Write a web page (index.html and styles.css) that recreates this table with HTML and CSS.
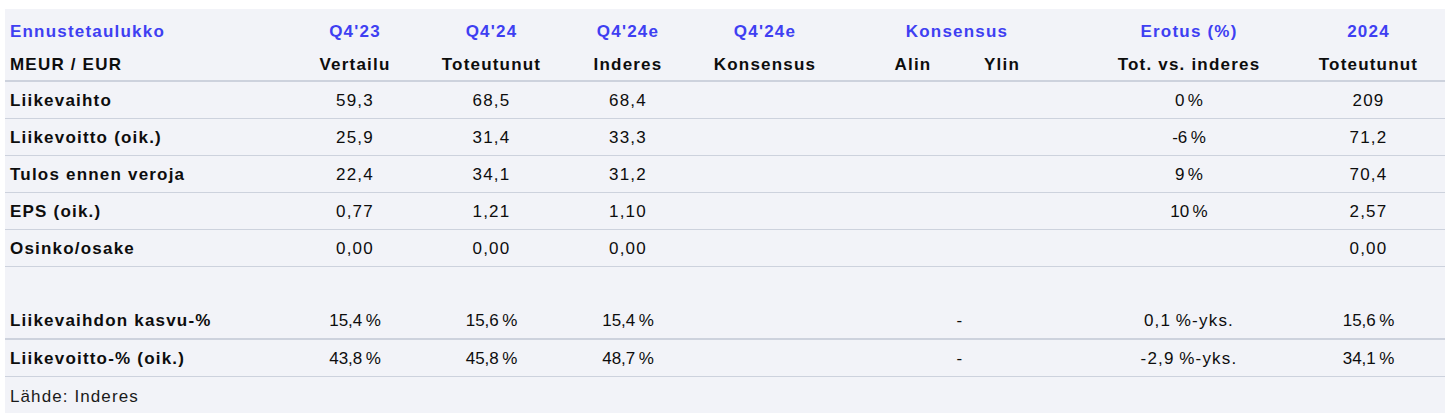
FILE: index.html
```html
<!DOCTYPE html>
<html lang="fi">
<head>
<meta charset="utf-8">
<title>Ennustetaulukko</title>
<link rel="stylesheet" href="styles.css">
</head>
<body>
<div class="panel">
  <div class="row head-top">
    <div class="cell label">Ennustetaulukko</div>
    <div class="cell">Q4'23</div>
    <div class="cell">Q4'24</div>
    <div class="cell">Q4'24e</div>
    <div class="cell">Q4'24e</div>
    <div class="cell span2 kons">Konsensus</div>
    <div class="cell erotus">Erotus (%)</div>
    <div class="cell">2024</div>
  </div>
  <div class="row head-sub">
    <div class="cell label">MEUR / EUR</div>
    <div class="cell">Vertailu</div>
    <div class="cell">Toteutunut</div>
    <div class="cell">Inderes</div>
    <div class="cell">Konsensus</div>
    <div class="cell alin">Alin</div>
    <div class="cell">Ylin</div>
    <div class="cell erotus">Tot. vs. inderes</div>
    <div class="cell">Toteutunut</div>
  </div>
  <div class="row data">
    <div class="cell label">Liikevaihto</div>
    <div class="cell">59,3</div><div class="cell">68,5</div><div class="cell">68,4</div>
    <div class="cell"></div><div class="cell span2 dash"></div>
    <div class="cell erotus">0&#8239;%</div><div class="cell">209</div>
  </div>
  <div class="row data">
    <div class="cell label">Liikevoitto (oik.)</div>
    <div class="cell">25,9</div><div class="cell">31,4</div><div class="cell">33,3</div>
    <div class="cell"></div><div class="cell span2 dash"></div>
    <div class="cell erotus">-6&#8239;%</div><div class="cell">71,2</div>
  </div>
  <div class="row data">
    <div class="cell label">Tulos ennen veroja</div>
    <div class="cell">22,4</div><div class="cell">34,1</div><div class="cell">31,2</div>
    <div class="cell"></div><div class="cell span2 dash"></div>
    <div class="cell erotus">9&#8239;%</div><div class="cell">70,4</div>
  </div>
  <div class="row data">
    <div class="cell label">EPS (oik.)</div>
    <div class="cell">0,77</div><div class="cell">1,21</div><div class="cell">1,10</div>
    <div class="cell"></div><div class="cell span2 dash"></div>
    <div class="cell erotus">10&#8239;%</div><div class="cell">2,57</div>
  </div>
  <div class="row data">
    <div class="cell label">Osinko/osake</div>
    <div class="cell">0,00</div><div class="cell">0,00</div><div class="cell">0,00</div>
    <div class="cell"></div><div class="cell span2 dash"></div>
    <div class="cell erotus"></div><div class="cell">0,00</div>
  </div>
  <div class="row blank"></div>
  <div class="row data thick">
    <div class="cell label">Liikevaihdon kasvu-%</div>
    <div class="cell">15,4&#8239;%</div><div class="cell">15,6&#8239;%</div><div class="cell">15,4&#8239;%</div>
    <div class="cell"></div><div class="cell span2 dash">-</div>
    <div class="cell erotus">0,1&#8239;%-yks.</div><div class="cell">15,6&#8239;%</div>
  </div>
  <div class="row data">
    <div class="cell label">Liikevoitto-% (oik.)</div>
    <div class="cell">43,8&#8239;%</div><div class="cell">45,8&#8239;%</div><div class="cell">48,7&#8239;%</div>
    <div class="cell"></div><div class="cell span2 dash">-</div>
    <div class="cell erotus">-2,9&#8239;%-yks.</div><div class="cell">34,1&#8239;%</div>
  </div>
  <div class="source">Lähde: Inderes</div>
</div>
</body>
</html>
```

FILE: styles.css
```css
html, body {
  margin: 0;
  padding: 0;
  background: #ffffff;
}

body {
  font-family: "Liberation Sans", Arial, sans-serif;
  font-size: 17px;
  color: #0d0d0d;
}

.panel {
  width: 1440px;
  height: 404px;
  margin: 9px 0 0 5px;
  background: #f2f3f8;
  display: flex;
  flex-direction: column;
}

.row {
  box-sizing: border-box;
  display: grid;
  grid-template-columns: 282px 136px 137px 136px 138px 124px 88px 246px 153px;
  align-items: center;
  letter-spacing: 1.2px;
}

.cell {
  text-align: center;
  white-space: nowrap;
}

.cell.label {
  text-align: left;
  padding-left: 5px;
  font-weight: 700;
}

.span2 {
  grid-column: span 2;
}

.kons {
  padding-left: 34px;
}

.alin {
  padding-left: 34px;
}

.dash {
  padding-left: 40px;
}

.erotus {
  padding-left: 40px;
}

.head-top {
  height: 40px;
  padding-top: 5px;
  color: #3f3ff2;
  font-weight: 700;
}

.head-sub {
  height: 33px;
  font-weight: 700;
  border-bottom: 2px solid #cdd2dd;
}

.data {
  height: 37px;
  padding-top: 2px;
  border-bottom: 1px solid #cdd2dd;
}

.data.thick {
  height: 38px;
  border-bottom: 2px solid #cdd2dd;
}

.blank {
  height: 35px;
}

.source {
  flex: 1;
  display: flex;
  align-items: center;
  padding-left: 5px;
  padding-top: 4px;
  letter-spacing: 1.1px;
  color: #1a1a1a;
}
```
